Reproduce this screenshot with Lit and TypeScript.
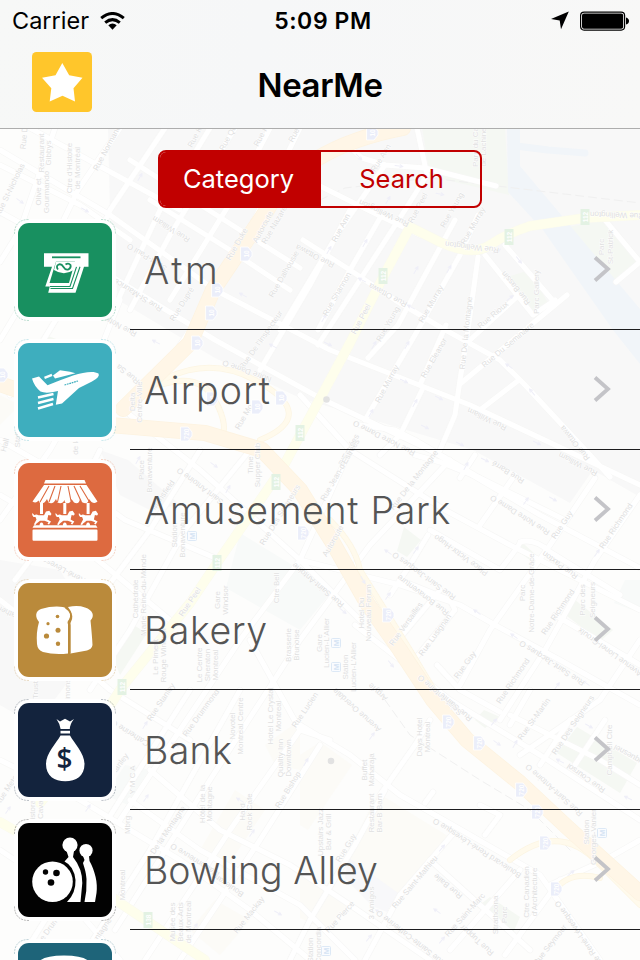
import { LitElement, html, css, svg } from 'lit';
import { customElement, property, state } from 'lit/decorators.js';
import { classMap } from 'lit/directives/class-map.js';

type Road = [kind: string, path: string];
type Label = [x: number, y: number, angle: number, text: string];

/** Areas under the street grid: class name + polygon points. */
const AREAS: [string, string][] = [
  ['industrial', '108,128 640,128 640,497 593,470 570,503 473,450 300,398 215,358 118,300 110,215'],
  ['industrial', '100,450 128,460 180,505 150,510 120,495'],
  ['industrial', '0,560 60,570 100,640 35,725 0,705'],
  ['park', '422,128 505,128 509,195 430,176'],
  ['park', '567,227 607,220 637,262 613,287'],
  ['park', '507,277 530,270 550,307 533,317'],
  ['park', '404,527 421,540 407,557 397,551'],
  ['park', '512,547 524,544 536,555 530,560'],
  ['park', '563,613 575,600 613,630 600,641'],
  ['park', '577,727 637,763 620,793 557,753'],
  ['park', '484,710 500,717 485,728 475,720'],
  ['park', '490,897 520,917 513,933 477,907'],
  ['park', '130,623 147,633 120,675 114,660'],
  ['park', '45,335 68,343 60,352 40,345'],
  ['plaza', '240,533 333,590 300,630 226,588'],
  ['plaza', '625,580 640,580 640,613 614,603'],
  ['plaza', '125,765 150,770 128,805 105,795'],
  ['cream', '300,755 320,742 352,765 308,830 300,825'],
  ['cream', '378,793 451,838 396,903 345,858'],
  ['cream', '300,865 348,905 325,930 300,918'],
  ['cream', '265,745 300,720 300,770 275,765'],
  ['cream', '235,790 265,810 225,870 200,850'],
  ['cream', '215,900 250,920 220,955 190,930'],
  ['cream', '0,395 20,405 0,425'],
  ['dusk', '348,857 398,893 387,912 372,906 345,878'],
];

/** Street network, drawn in order. */
const ROADS: Road[] = [
  ['local', 'M0 150L110 215 215 290 330 350 470 405 640 485'],
  ['local', 'M0 212L60 245 150 300 215 340 320 398 430 450 540 515 640 568'],
  ['local', 'M55 128L20 230 0 262'],
  ['local', 'M120 128L78 190 30 290 0 340'],
  ['local', 'M165 128L110 210 80 280 10 395'],
  ['local', 'M0 165L80 205 130 240'],
  ['local', 'M30 128L180 210'],
  ['local', 'M210 128L160 210 118 300'],
  ['local', 'M235 128L170 235 130 310'],
  ['local', 'M270 128L235 195 170 300'],
  ['local', 'M300 128L262 205 220 285 150 390'],
  ['local', 'M130 160L240 230 300 268'],
  ['local', 'M150 200L230 250 290 290'],
  ['local', 'M320 186L372 212 420 235'],
  ['local', 'M345 143L362 158 385 165 425 168 496 186'],
  ['local', 'M417 128L427 175 405 210 318 345'],
  ['local', 'M385 165L340 230 280 330'],
  ['local', 'M350 210L310 285 260 370'],
  ['local', 'M303 240L350 270 395 300 440 327 500 360 525 385 590 455 610 477'],
  ['local', 'M380 218L350 270 318 330'],
  ['local', 'M455 220L425 275 398 325 368 358'],
  ['local', 'M478 215L460 255 415 335 365 420'],
  ['local', 'M478 257L468 330 460 380 455 415 440 450'],
  ['local', 'M485 255L533 315 555 300'],
  ['local', 'M505 245L555 303'],
  ['local', 'M567 295L460 384'],
  ['local', 'M446 325L420 385'],
  ['local', 'M519 295L470 340'],
  ['local', 'M605 220L640 262M640 262L616 282'],
  ['local', 'M519 380L480 410'],
  ['local', 'M422 390L400 435 380 455'],
  ['local', 'M360 425L395 430 415 440 500 490'],
  ['local', 'M120 300L100 350 90 380 50 450 0 520'],
  ['local', 'M0 440L70 480 125 520 220 560'],
  ['local', 'M0 495L60 530 110 570 170 620'],
  ['local', 'M0 600L70 655 110 690 190 740'],
  ['local', 'M100 450L75 500 15 580'],
  ['local', 'M200 450L150 530 90 610'],
  ['local', 'M250 450L185 530 130 630 90 690'],
  ['local', 'M130 415L200 470 300 560 360 620'],
  ['local', 'M350 450L300 560 240 640 120 820'],
  ['local', 'M450 460L370 545 300 640 210 780 115 930'],
  ['local', 'M300 395L350 450 445 510 510 545 640 610'],
  ['local', 'M300 560L400 585 460 605 495 625 560 660 640 705'],
  ['local', 'M415 455L440 462 480 478 565 520'],
  ['local', 'M475 455L460 478M515 475L480 525'],
  ['local', 'M595 478L550 545 490 630 460 685'],
  ['local', 'M640 495L595 560 545 650 500 720'],
  ['local', 'M430 530L500 570Q520 545 520 542Q535 538 550 552L620 595'],
  ['local', 'M428 535L410 565 390 595'],
  ['local', 'M400 580L450 600 455 610 410 665'],
  ['local', 'M390 650L440 590'],
  ['local', 'M640 640L600 700 520 755'],
  ['local', 'M555 615L640 665'],
  ['local', 'M355 625L400 660 450 700 540 755 640 820'],
  ['local', 'M437 665L460 690 500 712'],
  ['local', 'M300 725L350 755 400 795 470 835 540 875 600 960'],
  ['local', 'M0 760L80 800 180 860 250 910 310 960'],
  ['local', 'M250 640L300 730 330 740'],
  ['local', 'M190 690L120 800 20 960'],
  ['local', 'M240 690L150 850 80 960'],
  ['local', 'M300 730L230 830 145 960'],
  ['local', 'M320 745L260 840 180 960'],
  ['local', 'M385 790L355 845 310 920 290 960'],
  ['local', 'M452 835L400 895 365 960'],
  ['local', 'M380 795L415 745 430 720'],
  ['local', 'M130 800L200 850 300 905 355 960'],
  ['local', 'M150 770L220 830 290 865 350 905 430 960'],
  ['local', 'M430 860L480 905 530 950'],
  ['local', 'M520 870L450 950'],
  ['local', 'M560 880L505 955'],
  ['local', 'M425 803L433 792M480 805L500 815 485 835'],
  ['local', 'M530 690L510 725M510 715L600 760 640 785'],
  ['local', 'M570 720L540 765M605 720L575 765'],
  ['local', 'M640 840L605 860 550 885'],
  ['local', 'M0 850L60 890 120 960'],
  ['yellow', 'M410 227L383 277 350 343 310 417 283 467 217 563 190 603 122 687 75 760 40 803'],
  ['yellow', 'M410 227L440 242Q472 257 490 245T530 226L585 218 640 215'],
  ['yellow', 'M0 822L40 845 120 903 205 960'],
  ['ramp', 'M160 385Q200 372 215 400T220 440'],
  ['ramp', 'M123 410Q190 345 255 380T260 440'],
  ['ramp', 'M330 520Q355 545 360 570L410 650 440 700'],
  ['ramp', 'M510 860Q560 820 600 865L640 905'],
  ['ramp', 'M555 890Q570 870 600 878'],
  ['highway', 'M403 128Q300 148 267 210L213 290 190 343 123 409'],
  ['highway', 'M0 384L60 405 110 425 205 433 262 450 300 490 333 543 367 603 400 650 433 700 467 740 520 783 567 827 640 893'],
];

const LABELS: Label[] = [
  [10, 190, -64, 'Rue St-Nicholas'],
  [24, 138, -85, 'Rue D'],
  [41, 153, -90, 'Restaurant'],
  [48, 153, -90, 'Gibbys'],
  [69, 168, -90, "Ctre d'Histoire"],
  [77, 168, -90, 'de Montréal'],
  [38, 192, -90, 'Olive et'],
  [46, 192, -90, 'Gourmando'],
  [107, 148, -62, 'Rue Normand'],
  [195, 137, -62, 'Rue K'],
  [228, 138, -62, 'Rue Qu'],
  [261, 136, -62, 'Rue P'],
  [294, 135, -62, 'Rue'],
  [381, 158, -58, 'Rue Ann'],
  [418, 208, -62, 'Rue Peel'],
  [452, 210, -60, 'Rue Young'],
  [475, 147, -90, 'Parc du Ca'],
  [483, 147, -90, 'de Lachine'],
  [384, 213, 205, 'Rue Wellington'],
  [472, 247, 187, 'Rue  Wellington'],
  [617, 215, 182, 'Rue Wellington'],
  [341, 228, -62, 'Rue Ann'],
  [315, 256, 207, 'Rue Ottawa'],
  [337, 294, -60, 'Rue Shannon'],
  [388, 295, 208, 'Rue Ottawa'],
  [431, 304, -60, 'Rue Murray'],
  [473, 226, -60, 'Rue Murray'],
  [361, 319, -62, 'Rue Peel'],
  [388, 324, -60, 'Rue Young'],
  [516, 288, 231, 'Rue Bassin'],
  [536, 292, -90, 'Parc Gallery'],
  [601, 247, -90, 'Parc'],
  [610, 247, -90, 'St-Patrick'],
  [493, 315, -40, 'Rue Rioux'],
  [466, 333, -84, 'Rue De la Montagne'],
  [508, 345, -40, 'Rue Du Seminaire'],
  [434, 358, -60, 'Rue Eleanor'],
  [387, 384, -62, 'Rue Murray'],
  [487, 419, 206, 'Rue William'],
  [384, 438, 207, 'Rue Notre Dame  O'],
  [575, 443, 231, 'Rue Ottawa'],
  [349, 450, -62, "D'Estrées"],
  [171, 229, 212, 'Rue William'],
  [147, 257, 212, 'Saint-Paul  O'],
  [138, 295, 212, 'Rue St-Maurice'],
  [182, 304, -58, 'Rue Dupré'],
  [237, 244, -60, 'Rue Duke'],
  [263, 227, -62, 'Autoroute'],
  [276, 222, -60, 'Rue Nazareth'],
  [284, 274, -60, 'Rue Dalhousie'],
  [261, 340, -55, "Rue De l'Inspecteur"],
  [120, 326, 208, 'Rue Notre'],
  [247, 371, 200, 'Notre Dame O'],
  [128, 374, 218, 'Rue Sa'],
  [132, 402, -90, 'Delta'],
  [139, 402, -90, 'Centre-Ville'],
  [244, 417, -60, 'Rue Mo'],
  [5, 445, -75, 'Hall'],
  [17, 435, -90, 'Station'],
  [75, 438, -90, 'de la ville'],
  [141, 470, -90, 'Place'],
  [149, 470, -90, 'Bonaventure'],
  [163, 495, -54, 'Mansfield'],
  [200, 486, 217, 'Saint Antoine  O'],
  [174, 535, -90, 'Station'],
  [182, 535, -90, 'Bonaventure'],
  [250, 465, -90, 'Time'],
  [257, 465, -90, 'Supper Club'],
  [280, 515, -58, 'Rue Des Seigneurs'],
  [60, 568, 208, 'René-Lévesque'],
  [135, 599, -90, 'Cathédrale'],
  [143, 595, -90, 'Marie Reine-du-Monde'],
  [190, 602, -56, 'Rue Peel'],
  [217, 600, -90, 'Gare'],
  [225, 600, -90, 'Windsor'],
  [276, 588, -90, 'Ctre Bell'],
  [155, 657, -90, 'Le Piment'],
  [163, 655, -90, 'Rouge Windsor'],
  [199, 665, -90, 'Le Centre'],
  [207, 665, -90, 'Sheraton'],
  [215, 665, -90, 'Montreal'],
  [288, 645, -90, 'Brasserie'],
  [296, 645, -90, 'Brunoise'],
  [5, 611, 205, 'Catherine'],
  [340, 470, -60, "Rue Jean-d'Estrées"],
  [414, 480, -52, 'Rue De la Montagne'],
  [508, 472, 212, 'Rue Barré'],
  [578, 464, 208, 'Rue William'],
  [520, 515, 212, 'Rue Notre Dame  O'],
  [562, 525, -56, 'Rue Guy'],
  [616, 526, -56, 'Rue Richmond'],
  [461, 555, 216, 'Place Victor-Hugo'],
  [560, 565, 216, 'Rue Paxton'],
  [522, 593, -90, 'Parc'],
  [531, 593, -90, 'Notre-Dame-de-Grâce'],
  [424, 576, 216, 'Rue Saint-Jacques  O'],
  [423, 595, 217, 'Rue Bonaventure'],
  [558, 612, -56, 'Rue Richmond'],
  [582, 600, -90, 'Parc des'],
  [592, 600, -90, 'Seigneurs'],
  [333, 541, -60, 'Autoroute'],
  [318, 585, 220, 'Rue Saint-Antoine'],
  [406, 624, -54, 'Rue Versailles'],
  [435, 635, -54, 'Rue Lusignan'],
  [465, 665, -54, 'Rue Guy'],
  [513, 681, -56, 'Rue Richmond'],
  [552, 663, 213, 'Rue Saint-Jacques  O'],
  [610, 652, 216, 'Avenue Lionel-Groulx'],
  [361, 613, -90, 'Hotel Du'],
  [368, 613, -90, 'Nouveau Forum'],
  [319, 643, -90, 'Gare'],
  [326, 643, -90, "Lucien-L'Allier"],
  [345, 667, -90, 'Station'],
  [353, 667, -90, "Lucien-L'Allier"],
  [440, 695, 222, 'Saint-Antoine  O'],
  [378, 692, 222, 'Argyle'],
  [161, 702, -56, 'Rue Stanley'],
  [201, 713, -54, 'Rue Drummond'],
  [130, 733, 212, 'Catherine  O'],
  [132, 780, -90, 'Y M C A'],
  [119, 765, -54, 'Stanley'],
  [232, 726, -90, 'Novotel'],
  [240, 726, -90, 'Montreal Centre'],
  [270, 716, -90, 'Hotel Le Crystal'],
  [278, 716, -90, 'Montreal'],
  [280, 758, -90, 'Quality Inn'],
  [288, 758, -90, 'Downtown'],
  [288, 790, -58, 'Rue Bishop'],
  [202, 804, -90, 'Hôtel de la'],
  [209, 804, -90, 'Montagne'],
  [242, 812, -90, 'Hard'],
  [249, 812, -90, 'Rock Cafe'],
  [168, 830, -56, 'De la Montagne'],
  [195, 860, 212, 'Maisonneuve  O'],
  [228, 885, 214, 'Boulevard'],
  [249, 915, -52, 'Rue Mackay'],
  [122, 885, -90, 'Montreal'],
  [127, 825, -90, 'Mbrg'],
  [172, 922, -90, 'Musée des'],
  [180, 922, -90, 'Beaux-Arts'],
  [188, 922, -90, 'de Montreal'],
  [52, 925, -54, 'Rue Drummond'],
  [94, 942, -56, 'De la Montagne'],
  [10, 785, -56, 'Rue Metcalfe'],
  [32, 807, -90, 'Ristorante'],
  [40, 807, -90, 'Cavalli'],
  [35, 690, -90, 'Trust'],
  [67, 692, -90, 'Simons'],
  [305, 710, -56, 'Rue Lucien'],
  [357, 710, 222, 'Avenue Overdale'],
  [419, 737, -90, 'Days Hotel'],
  [427, 737, -90, 'Montreal'],
  [456, 707, 220, 'Rue Sainte'],
  [534, 719, -54, 'Rue St-Martin'],
  [573, 725, -56, 'Rue Des Seigneurs'],
  [609, 750, -90, 'Campbell Ctre'],
  [586, 778, 215, 'Rue Coursol'],
  [631, 756, 210, 'Duquesnel'],
  [554, 790, 222, 'Rue Saint-Antoine  O'],
  [586, 832, -90, 'Station'],
  [593, 837, -90, 'Georges-Vanier'],
  [364, 770, -90, 'Buffet'],
  [371, 770, -90, 'Maharaja'],
  [371, 813, -90, 'Restaurant'],
  [379, 813, -90, 'Bar-B Barn'],
  [320, 832, -90, 'Upstairs Jazz'],
  [328, 832, -90, 'Bar & Grill'],
  [346, 848, -58, 'Rue Guy'],
  [477, 848, 213, 'Boulevard René-Lévesque  O'],
  [415, 882, -50, 'Rue Saint-Mathieu'],
  [448, 886, 220, 'Rue Baile'],
  [465, 915, -48, 'Rue Saint-Marc'],
  [340, 917, -48, 'Rue Pierce'],
  [371, 903, -90, '3 Amigos'],
  [411, 938, 218, 'Rue Sainte-Catherine  O'],
  [477, 940, 222, 'Rue Tupper'],
  [495, 915, -90, 'Strathcona'],
  [504, 915, -90, 'Parc'],
  [526, 892, -90, 'Ctre Canadien'],
  [534, 892, -90, "d'Architecture"],
  [580, 935, 235, 'Rue René-Lévesque  O'],
  [550, 945, -52, 'Rue Seymour'],
  [310, 950, -90, 'Station'],
  [318, 945, -90, 'Concordia'],
];

/** Route markers: x, y, number. */
const SHIELDS: [number, number, string][] = [
  [372, 133, '10'], [246, 254, '10'], [217, 290, '10'], [211, 313, '10'],
  [197, 343, '10'], [2, 375, '10'], [257, 407, '10'], [281, 398, '10'],
  [212, 399, '10'], [186, 434, '720'], [303, 533, '720'], [388, 615, '720'],
  [448, 722, '720'], [479, 743, '720'], [521, 790, '720'], [537, 812, '720'],
  [545, 843, '720'], [556, 889, '720'], [585, 217, '112'], [509, 237, '112'],
  [383, 276, '112'], [300, 433, '112'], [276, 482, '112'], [217, 563, '112'],
  [122, 687, '112'], [148, 920, '138'],
];

const METRO: [number, number][] = [[192, 536], [336, 667], [336, 643], [602, 833], [326, 951]];

/** One-way arrows: x, y, angle. */
const ARROWS: [number, number, number][] = [
  [140, 177, -60], [85, 210, 30], [20, 201, 35], [359, 157, 45], [399, 166, 8],
  [440, 194, 12], [388, 200, -60], [329, 250, -60], [365, 243, -60], [416, 270, -60],
  [449, 269, -60], [497, 251, -30], [519, 260, 52], [510, 298, -40], [362, 280, 208],
  [411, 307, 208], [324, 318, -60], [407, 345, -60], [374, 345, -60], [328, 344, 25],
  [404, 381, 25], [439, 398, 25], [415, 403, -60], [371, 413, -60], [509, 366, 215],
  [532, 392, 230], [537, 443, 25], [460, 444, 25], [425, 427, 25], [243, 295, 208],
  [156, 342, 208], [273, 346, 208], [138, 460, -60], [228, 489, -60], [214, 465, 35],
  [466, 466, -60], [485, 460, 25], [553, 499, 30], [526, 501, -55], [597, 553, -55],
  [416, 550, -55], [388, 552, 215], [477, 612, 215], [514, 636, 215], [388, 596, -55],
  [343, 611, 40], [363, 580, 60], [391, 664, 50], [586, 683, 215], [557, 686, -55],
  [372, 736, -55], [306, 762, -60], [497, 743, 35], [494, 722, -50], [515, 744, -60],
  [589, 726, 30], [560, 761, 208], [628, 798, 205], [442, 848, -50], [437, 911, 215],
  [379, 912, 215], [369, 938, -50], [442, 940, -50], [571, 873, -40], [145, 725, -58],
  [175, 745, 212], [240, 800, 212], [88, 808, -56], [146, 798, -56], [160, 840, -56],
  [252, 833, -56], [195, 927, -56], [278, 913, 30], [40, 733, 35], [8, 810, -56],
];

@customElement('city-map')
export class CityMap extends LitElement {
  static styles = css`
    :host {
      display: block;
    }
    svg {
      display: block;
      width: 640px;
      height: 960px;
    }
    .ground { fill: #fdfdfc; }
    .industrial { fill: #f8f8f8; }
    .park { fill: #f5f8f3; }
    .plaza { fill: #f8faf9; }
    .cream { fill: #fcfbf7; }
    .dusk { fill: #f8f8fa; }
    .water { fill: #f1f5f9; }
    .creek { fill: none; stroke: #f1f5f9; stroke-width: 7; stroke-linecap: round; }
    path {
      fill: none;
      stroke-linejoin: round;
      stroke-linecap: round;
    }
    .local-casing { stroke: #f7f7f6; stroke-width: 6.4; }
    .local { stroke: #fff; stroke-width: 5; }
    .yellow-casing { stroke: #fafaef; stroke-width: 10; }
    .yellow { stroke: #fefeec; stroke-width: 9; }
    .ramp-casing { stroke: #fcf5e3; stroke-width: 6; }
    .ramp { stroke: #fffaec; stroke-width: 4.5; }
    .highway-casing { stroke: #fdf3e1; stroke-width: 16; }
    .highway { stroke: #fff6e7; stroke-width: 14.5; }
    .rail { stroke: #f0f0f0; stroke-width: 1; stroke-dasharray: 8 5; }
    .arrow { stroke: #efeff8; stroke-width: 1; }
    .dot { fill: #e2e2e2; }
    text {
      font-family: 'Liberation Sans', Arial, sans-serif;
      text-anchor: middle;
      dominant-baseline: central;
    }
    .label {
      font-size: 8px;
      fill: #e0e0e0;
      stroke: #fff;
      stroke-width: 1px;
      paint-order: stroke;
    }
    .shield { fill: #ebeefa; stroke: #fff; stroke-width: 0.8; }
    .route { fill: #e3f2e3; }
    .metro { fill: #fafcff; stroke: #dde9f6; }
    .number { font-size: 6.5px; font-weight: bold; fill: #fff; }
    .letter { font-size: 8px; font-weight: bold; fill: #d6e4f4; }
  `;

  private renderShield(x: number, y: number, text: string) {
    const shape = text.startsWith('1') && text.length === 3
      ? svg`<rect class="route" x="-4.5" y="-8" width="9" height="16"></rect>`
      : svg`<path class="shield" d="M-5 -7H2L6 -2V2L2 7H-5Z"></path>`;
    return svg`
      <g transform="translate(${x} ${y})">
        ${shape}
        <text class="number" transform="rotate(-90)">${text}</text>
      </g>`;
  }

  render() {
    return html`
      <svg viewBox="0 0 640 960" aria-hidden="true">
        <rect class="ground" width="640" height="960"></rect>
        ${AREAS.map(([kind, points]) => svg`<polygon class=${kind} points=${points}></polygon>`)}
        <polygon class="water" points="507,128 520,128 520,166 557,210 640,309 640,364 613,330 543,230 508,192"></polygon>
        <path class="creek" d="M516 146L548 150 585 153"></path>
        <path class="rail" d="M320 200L345 188 430 178 640 203"></path>
        <path class="rail" d="M385 700L410 735 480 780 530 810 570 850"></path>
        ${['local', 'yellow', 'ramp', 'highway'].map((kind) => {
          const roads = ROADS.filter((road) => road[0] === kind);
          return svg`
            ${roads.map(([, d]) => svg`<path class="${kind}-casing" d=${d}></path>`)}
            ${roads.map(([, d]) => svg`<path class=${kind} d=${d}></path>`)}`;
        })}
        ${ARROWS.map(([x, y, a]) => svg`
          <path class="arrow" d="M-4 0H4M1 -1.5L4 0 1 1.5" transform="translate(${x} ${y}) rotate(${a})"></path>`)}
        ${LABELS.map(([x, y, a, text]) => svg`
          <text class="label" transform="translate(${x} ${y}) rotate(${a})">${text}</text>`)}
        ${SHIELDS.map(([x, y, text]) => this.renderShield(x, y, text))}
        ${METRO.map(([x, y]) => svg`
          <g transform="translate(${x} ${y})">
            <rect class="metro" x="-4.5" y="-4.5" width="9" height="9" rx="1"></rect>
            <text class="letter" transform="rotate(-90)">M</text>
          </g>`)}
        <circle class="dot" cx="326.5" cy="399.5" r="3.3"></circle>
        <circle class="dot" cx="331" cy="761" r="3.3"></circle>
      </svg>
    `;
  }
}

/** Glyphs on a 94x94 tile, white on the tile colour (currentColor). */
const GLYPHS: Record<string, unknown> = {
  atm: svg`
    <path d="M26 30.300H70.500V43.800H66L57.500 69.700H30.200L31.800 63.500H27.300L34 43.800H26Z"></path>
    <path class="line" d="M34 34.300H62.500"></path>
    <path class="ink" d="M38 38.500H57L51 60H31.500Z"></path>
    <path class="line thin" d="M32.500 65.500H54.500L62 43.800M32 63.500H52L58.500 43.800"></path>
    <path d="M38 38.500H58L55.500 47Q46 53.500 36 47Z"></path>
    <path class="line" d="M40 46.500C36.500 42 42.500 39 45.500 44S53.500 46 52.500 42Q50.500 39.500 47.500 41.500"></path>`,
  airport: svg`
    <path d="M14 35.500L21 33.600 29.500 42.300Q45 36 55 32.500C66 29 76 27.500 80.500 30.500Q82.500 34 74 38.500L61 45 44 60.500 37.800 61.800 40 48Q28 51 22.500 48.500Q16 43 14 35.500Z"></path>
    <path d="M35 32.500L42 27.200 52 28.800 57.500 30.300 37 35.500Z"></path>
    <path class="stroke" d="M26.500 34.800L34 31.800"></path>
    <path class="stroke" d="M20 54.500L35.500 51M20 60L35.500 56M20 65.500L35 61"></path>
    <path class="line dots" d="M46.500 42L60 38"></path>`,
  amusement: svg`
    <path d="M27.500 17H66.500L68 20.500H26Z"></path>
    <path d="M26 22H68.500L79.500 38.500Q77 41 73.500 39L71 36Q70 42 64.500 39.500L62 36Q61 42 56 39.500L53.500 36Q52 42 47 39.500L46.500 37Q44 42 39.500 39.500L38 36Q35 42 30.500 39.500L29 36Q26 42 21.500 39.500L20.500 37.500Q18 41 14.500 38.500Z"></path>
    <path class="line thin" d="M31 23L22 39M37 23L31 39M43 23L39.500 39M50 23L53 38M56 23L63 38M62 23L71 38"></path>
    ${[0, 23.3, 46.6].map((x) => svg`
      <g transform="translate(${x} 0)">
        <path d="M22 40H25V51H22ZM21.500 63Q21.500 59.500 23.500 59.500T25.500 63Z"></path>
        <path d="M14.300 50L16.500 52.300Q18 50.800 20.500 52.300H26L28 48.500 31.300 47.800 33.500 51 32.500 52.500 30.300 52 29.300 56.500 33 58.500 31 61.500 29.500 60.800 30.500 59.200 26.500 57.800H22L18.500 60.500 17.500 62 15.800 61.500 18.500 56.500 17.500 54 15.500 54Q13.500 52.500 14.300 50Z"></path>
      </g>`)}
    <path d="M16 62.200H78L79.500 64.800H14.500ZM15.500 66.500H78.500Q79.500 66.500 79.500 67.500V76.500Q79.500 77.700 78.500 77.700H15.500Q14.500 77.700 14.500 76.500V67.500Q14.500 66.500 15.500 66.500Z"></path>`,
  bakery: svg`
    <path d="M50 24Q60 22 67 24.500C75 27 77 33 72.500 37.500Q74 52 74.500 62Q74 66 69 67.500L52.500 70.500V40Q57 33 50 24Z"></path>
    <path d="M23 26Q35 22.500 45 24C53 26 55 34 50 39V70.500Q36 72 25 69Q19.500 67 19 61Q18 49 21 39C17 34 17 28 23 26Z"></path>
    <path class="line" d="M47.500 24.500Q56 30 51.500 37.500Q49.500 39.500 51.500 42L51.500 70"></path>
    <circle class="ink" cx="39.500" cy="33.500" r="1.800"></circle>
    <circle class="ink" cx="30" cy="40.700" r="1.600"></circle>
    <circle class="ink" cx="40" cy="47.300" r="2.500"></circle>
    <circle class="ink" cx="28.500" cy="53" r="2.600"></circle>
    <circle class="ink" cx="40" cy="60.800" r="2.200"></circle>`,
  bank: svg`
    <path d="M38.500 16L42 18.500 47 15.800 52 18.500 56 16Q52 21 51.800 26H42.600Q42 21 38.500 16Z"></path>
    <path d="M42.500 27.800H52V30.500H42.500Z"></path>
    <path d="M42.500 32.500H52C56 40 66.500 50 66.500 61C66.500 73 58 78.300 47.300 78.300S28 73 28 61C28 50 38.500 40 42.500 32.500Z"></path>
    <text class="dollar" x="46.500" y="66">$</text>`,
  bowling: svg`
    <circle cx="34.500" cy="58.800" r="20.300"></circle>
    <circle class="ink" cx="27.500" cy="49" r="2.700"></circle>
    <circle class="ink" cx="38.500" cy="50" r="3.300"></circle>
    <circle class="ink" cx="33" cy="59.500" r="3.300"></circle>
    <circle cx="52" cy="22" r="7.600"></circle>
    <path d="M48.500 28H56L55 34Q64.500 46 64.300 60L62.500 79H49Q58 70 57.500 57Q56 43 46.500 38.500L50.500 34Z"></path>
    <circle cx="68" cy="27.500" r="6.600"></circle>
    <path d="M65 33H71L71.500 38C77 48 80 60 78.500 70L77 79H66.500Q69 68 68.500 56C68 48 66 44 65 40L66.500 37Z"></path>`,
  bus: svg`<path d="M20 20Q24 12.500 46 12.500T72 20V40H20Z"></path>`,
};

@customElement('category-row')
export class CategoryRow extends LitElement {
  @property() name = '';
  @property() glyph = '';
  @property({ type: Number }) tracking = 0;

  static styles = css`
    :host {
      display: flex;
      height: 120px;
      box-sizing: border-box;
      padding-left: 14px;
    }

    .tile {
      flex: none;
      width: 102px;
      height: 102px;
      margin: 9px 14px 0 0;
    }

    .ring {
      fill: #fff;
    }

    .trim {
      fill: none;
      stroke: currentColor;
      stroke-width: 0.7;
      stroke-dasharray: 2 1;
      opacity: 0.4;
    }

    .plate,
    .ink {
      fill: currentColor;
    }

    .glyph {
      fill: #fff;
    }

    .line {
      fill: none;
      stroke: currentColor;
      stroke-width: 1.8;
    }

    .thin {
      stroke-width: 1.1;
    }

    .dots {
      stroke-width: 1.2;
      stroke-dasharray: 1.8 0.7;
    }

    .stroke {
      fill: none;
      stroke: #fff;
      stroke-width: 2.4;
    }

    .dollar {
      font: 600 28px 'Open Sans', sans-serif;
      text-anchor: middle;
      fill: currentColor;
    }

    .atm { color: #189060; }
    .airport { color: #3eaebe; }
    .amusement { color: #dd6a40; }
    .bakery { color: #ba8a3b; }
    .bank { color: #13233d; }
    .bowling { color: #020202; }
    .bus { color: #1e6479; }

    .body {
      flex: 1;
      display: flex;
      align-items: center;
      justify-content: space-between;
      box-sizing: border-box;
      border-bottom: 1px solid #1c1c1e;
      padding: 3px 29px 0 14px;
    }

    .name {
      font: 300 37.5px/44px Inter, 'Noto Sans', sans-serif;
      color: #555;
      white-space: nowrap;
    }

    .chevron {
      width: 18px;
      height: 28px;
      margin-top: -4px;
      fill: none;
      stroke: #c4c4c8;
      stroke-width: 3.8;
    }
  `;

  render() {
    return html`
      <svg class="tile ${this.glyph}" viewBox="-4 -4 102 102">
        <rect class="ring" x="-4" y="-4" width="102" height="102" rx="17"></rect>
        <path class="trim" d="M-3.500 11Q-3.500 -3.500 11 -3.500M83 -3.500Q97.500 -3.500 97.500 11M97.500 83Q97.500 97.500 83 97.500M11 97.500Q-3.500 97.500 -3.500 83"></path>
        <rect class="plate" width="94" height="94" rx="11"></rect>
        <g class="glyph">${GLYPHS[this.glyph]}</g>
      </svg>
      <div class="body">
        <span class="name" style="letter-spacing: ${this.tracking}px">${this.name}</span>
        <svg class="chevron" viewBox="0 0 18 28"><path d="M2 2.500L15 14 2 25.500"></path></svg>
      </div>
    `;
  }
}

@customElement('app-root')
export class AppRoot extends LitElement {
  @state() private tab = 'Category';

  private categories = [
    { name: 'Atm', glyph: 'atm', tracking: 2.5 },
    { name: 'Airport', glyph: 'airport', tracking: 1.3 },
    { name: 'Amusement Park', glyph: 'amusement', tracking: 0.7 },
    { name: 'Bakery', glyph: 'bakery', tracking: 0.5 },
    { name: 'Bank', glyph: 'bank', tracking: 0.3 },
    { name: 'Bowling Alley', glyph: 'bowling', tracking: 0 },
    { name: '', glyph: 'bus', tracking: 0 },
  ];

  static styles = css`
    :host {
      display: grid;
      width: 640px;
      height: 960px;
      overflow: hidden;
      font-family: Inter, 'Noto Sans', sans-serif;
    }

    city-map,
    .screen {
      grid-area: 1 / 1;
      min-height: 0;
    }

    .screen {
      z-index: 1;
      display: flex;
      flex-direction: column;
      height: 960px;
      overflow: hidden;
    }

    header {
      flex: none;
      height: 129px;
      box-sizing: border-box;
      background: linear-gradient(100deg, #f7f8f7, #f6f7f8 40%, #f8f8f7);
      border-bottom: 1px solid #adadad;
    }

    .status,
    .nav {
      display: grid;
      grid-template-columns: 1fr auto 1fr;
      align-items: center;
    }

    .status {
      height: 41px;
      padding: 0 10px 0 12px;
      font-size: 23.5px;
      color: #000;
    }

    .carrier,
    .power {
      display: flex;
      align-items: center;
    }

    .carrier {
      gap: 11px;
    }

    .time {
      padding-left: 4px;
      font-weight: 600;
      font-size: 23px;
      letter-spacing: 0.6px;
    }

    .power {
      justify-content: flex-end;
      gap: 11px;
    }

    .nav {
      height: 87px;
      padding: 0 32px;
    }

    .star {
      width: 60px;
      height: 60px;
      margin-top: -5px;
    }

    h1 {
      margin: 0;
      font-size: 33px;
      line-height: 40px;
      font-weight: 600;
      letter-spacing: -0.4px;
    }

    .tabs {
      flex: none;
      display: flex;
      width: 324px;
      height: 58px;
      box-sizing: border-box;
      margin: 21px auto 2px;
      border: 2px solid #c10000;
      border-radius: 8px;
      overflow: hidden;
    }

    .tabs button {
      flex: 1;
      border: 0;
      padding: 0 0 2px 2px;
      background: transparent;
      color: #c10000;
      font: 400 25.5px Inter, sans-serif;
    }

    .tabs .on {
      padding: 0 4px 2px 0;
      background: #c10000;
      color: #fff;
    }

    category-row {
      flex: none;
    }
  `;

  render() {
    return html`
      <city-map></city-map>
      <div class="screen">
        <header>
          <div class="status">
            <div class="carrier">
              <span>Carrier</span>
              <svg width="25" height="18" viewBox="0 0 25 18" fill="none" stroke="#000" stroke-width="3">
                <path d="M1.200 6.200Q12.500 -3.200 23.800 6.200M5.200 10.600Q12.500 4.600 19.800 10.600"></path>
                <path d="M8.300 13.200Q12.500 10 16.700 13.200L12.500 17.800Z" fill="#000" stroke="none"></path>
              </svg>
            </div>
            <span class="time">5:09 PM</span>
            <div class="power">
              <svg width="18" height="19" viewBox="0 0 18 19"><path d="M17.800 0.500L10 18.300 8.700 9.500 0 8Z"></path></svg>
              <svg width="50" height="20" viewBox="0 0 50 20">
                <rect x="0.600" y="1.100" width="44" height="18" rx="3.500" fill="#fff" stroke="#000" stroke-width="1.200"></rect>
                <rect x="2" y="2.500" width="41.200" height="15.200" rx="2"></rect>
                <path d="M46 6.500Q49 7.500 49 10T46 13.500Z"></path>
              </svg>
            </div>
          </div>
          <div class="nav">
            <svg class="star" viewBox="0 0 60 60">
              <rect width="60" height="60" rx="4.500" fill="#ffc62b"></rect>
              <path fill="#fff" d="M30.300 11L37.200 23.200 50.500 25.800 41.500 36.200 43 49.500 30.500 43.800 17.700 49.500 19.300 36.200 10 25.800 23.500 23.200Z"></path>
            </svg>
            <h1>NearMe</h1>
          </div>
        </header>
        <div class="tabs">
          ${['Category', 'Search'].map((tab) => html`
            <button
              class=${classMap({ on: this.tab === tab })}
              @click=${() => (this.tab = tab)}
            >${tab}</button>
          `)}
        </div>
        ${this.categories.map((c) => html`
          <category-row .name=${c.name} .glyph=${c.glyph} .tracking=${c.tracking}></category-row>
        `)}
      </div>
    `;
  }
}
